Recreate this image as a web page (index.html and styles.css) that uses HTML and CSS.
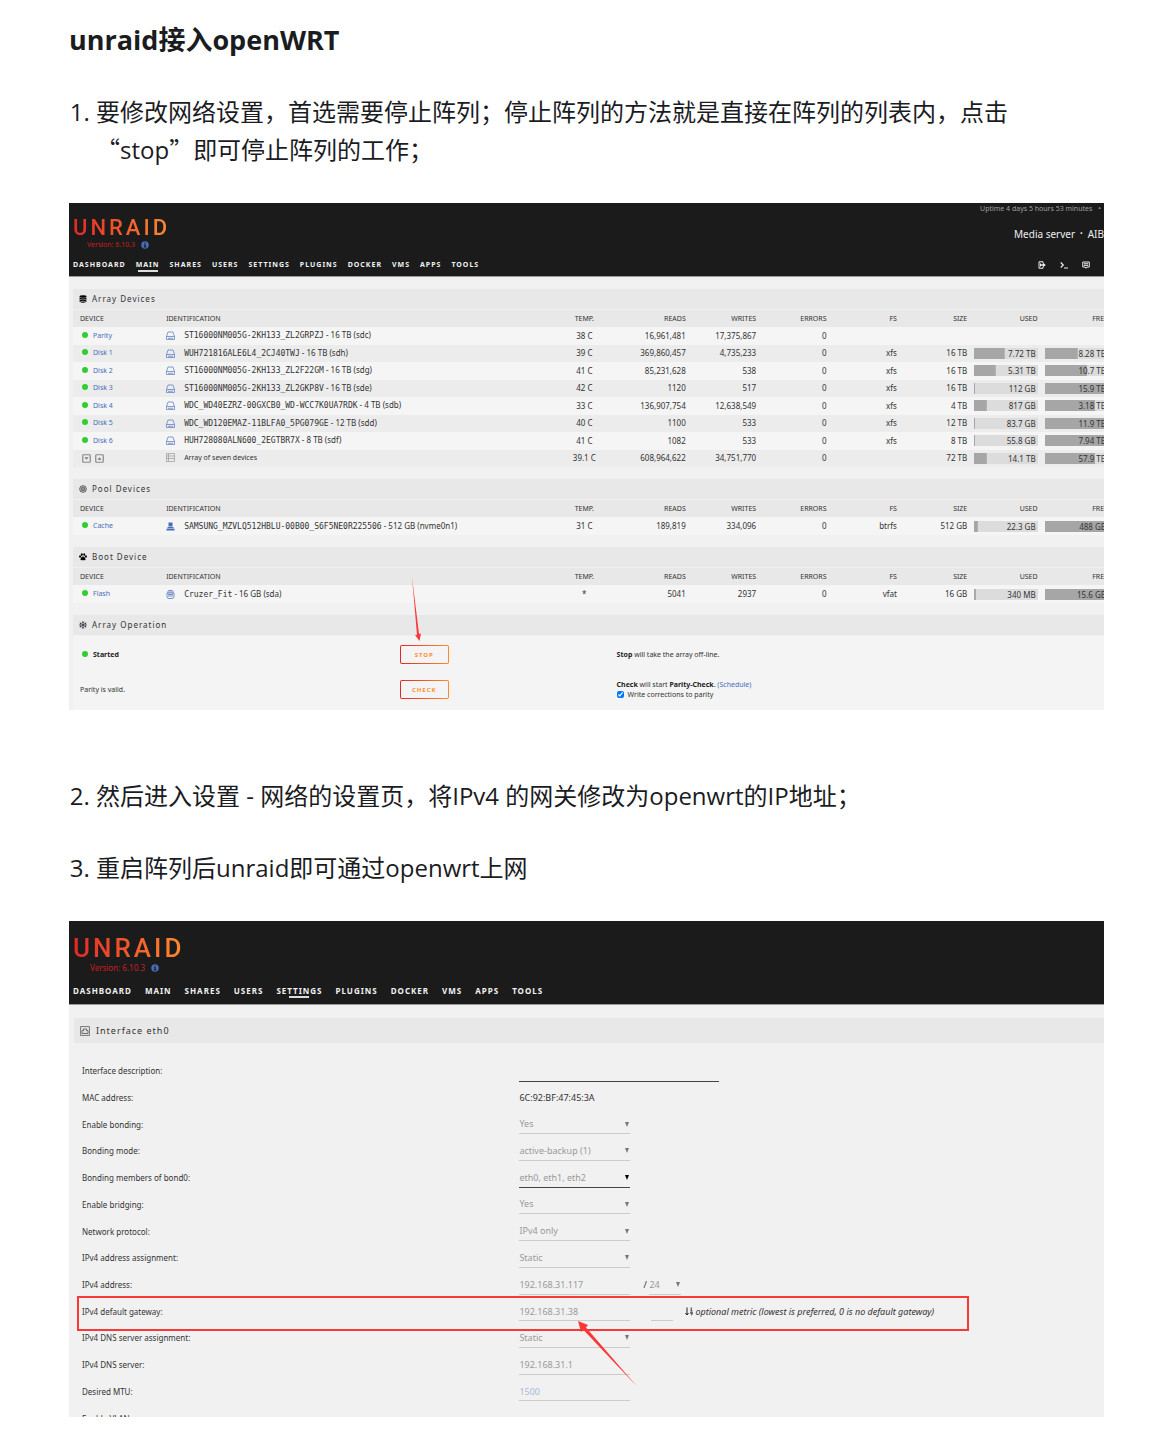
FILE: index.html
```html
<!DOCTYPE html>
<html lang="zh-CN">
<head>
<meta charset="utf-8">
<meta name="viewport" content="width=device-width, initial-scale=1">
<title>unraid接入openWRT</title>
<link rel="stylesheet" href="styles.css">
</head>
<body>
<svg class="sprite" aria-hidden="true">
  <symbol id="info" viewBox="0 0 16 16"><circle cx="8" cy="8" r="7.5" fill="#486dba"/><path d="M6.8 3h2.6v2.2H6.8zM5.8 6.6h3.6v4.6h1.2v1.6H5.6v-1.6h1.2V8.2h-1z" fill="#1b1b1b"/></symbol>
  <symbol id="disk" viewBox="0 0 18 18"><path d="M4 2h10l3 9v6H1v-6zM1 11h16M4 14.5h10" fill="none" stroke="#486dba" stroke-width="1.3"/></symbol>
  <symbol id="nvme" viewBox="0 0 18 18"><path d="M5 1h8v8H5zM4 10h10l3 3H1zM1 14h16v3H1z" fill="#486dba"/></symbol>
  <symbol id="usb" viewBox="0 0 18 18"><path d="M4 6V3q0-2 2-2h6q2 0 2 2v3M2 6h14v7q0 4-4 4H6q-4 0-4-4zM4 9h10M4 12h10M6 4h6" fill="none" stroke="#486dba" stroke-width="1.5"/></symbol>
  <symbol id="array" viewBox="0 0 18 18"><path d="M1 1h16v16H1zM1 6h16M1 11h16M5 1v16" fill="none" stroke="#999" stroke-width="1.4"/></symbol>
  <symbol id="database" viewBox="0 0 16 16"><ellipse cx="8" cy="3" rx="7" ry="2.6"/><path d="M1 4.8q7 3.6 14 0v2.6q-7 3.8-14 0zM1 8.5q7 3.6 14 0v2.4q-7 3.8-14 0zM1 12q7 3.6 14 0v1.6q-7 4-14 0z"/></symbol>
  <symbol id="pool" viewBox="0 0 16 16"><circle cx="8" cy="8" r="6.6" fill="none" stroke="#333" stroke-width="1.6"/><circle cx="8" cy="8" r="3.6" fill="none" stroke="#333" stroke-width="1.6"/><circle cx="8" cy="8" r="1.3"/></symbol>
  <symbol id="paw" viewBox="0 0 16 16"><ellipse cx="2.2" cy="7" rx="1.9" ry="2.4"/><ellipse cx="5.6" cy="3.2" rx="1.9" ry="2.6"/><ellipse cx="10.4" cy="3.2" rx="1.9" ry="2.6"/><ellipse cx="13.8" cy="7" rx="1.9" ry="2.4"/><path d="M8 7c2.5 0 5 3.500 5 5.600 0 2.400-2.800 2-5 1.400-2.200.6-5 1-5-1.400C3 10.500 5.500 7 8 7z"/></symbol>
  <symbol id="flake" viewBox="0 0 16 16"><path d="M8 .5v15M1.500 4.200l13 7.600M14.500 4.200l-13 7.600M5.800 1.500L8 3.700l2.200-2.200M5.800 14.500L8 12.300l2.200 2.200M1 7l3-.8L3.200 3M15 9l-3 .8.800 3.200M15 7l-3-.8.800-3.200M1 9l3 .8L3.200 13" fill="none" stroke="#222" stroke-width="1.4"/></symbol>
  <symbol id="down" viewBox="0 0 18 18"><rect x="1.500" y="1.500" width="15" height="15" rx="1.500" fill="none" stroke="#888" stroke-width="2.400"/><path d="M5 6.500h8l-4 5z" fill="#777"/></symbol>
  <symbol id="up" viewBox="0 0 18 18"><rect x="1.500" y="1.500" width="15" height="15" rx="1.500" fill="none" stroke="#888" stroke-width="2.400"/><path d="M5 11.500h8l-4-5z" fill="#777"/></symbol>
  <symbol id="logout" viewBox="0 0 16 16"><path d="M10 4.500V1.500H2v13h8v-3M5 5v6" fill="none" stroke="#eee" stroke-width="2"/><path d="M5.500 6.700H10V3.500L15.500 8 10 12.500V9.300H5.500z" fill="#eee"/></symbol>
  <symbol id="terminal" viewBox="0 0 16 16"><path d="M1.500 3l5 5-5 5M8 14h8" fill="none" stroke="#eee" stroke-width="2.400"/></symbol>
  <symbol id="chat" viewBox="0 0 16 16"><path d="M1.500 2h13v10H10l-2 2.500L6 12H1.500zM4 5.500h8M4 8.700h8" fill="none" stroke="#eee" stroke-width="2"/></symbol>
  <symbol id="port" viewBox="0 0 20 20"><path d="M1 1h18v18H1z" fill="#ddd" stroke="#666" stroke-width="1.600"/><path d="M4 15V9h3V6h6v3h3v6z" fill="none" stroke="#555" stroke-width="1.600"/></symbol>
  <symbol id="sort" viewBox="0 0 16 18"><path d="M4 1v14M.8 12L4 16l3.200-4" fill="none" stroke="#222" stroke-width="2"/><path d="M11 2.500l1.700-1V7M10.500 7.500h4.500M14.500 13.500h-3V10h3v4.500l-2.500 2" fill="none" stroke="#222" stroke-width="1.500"/></symbol>
</svg>

<main class="article">
  <h1>unraid接入openWRT</h1>

  <ol class="steps">
    <li>要修改网络设置，首选需要停止阵列；停止阵列的方法就是直接在阵列的列表内，点击<span class="cjk">“</span>stop<span class="cjk">”</span>即可停止阵列的工作；</li>
  </ol>

  <section class="shot shot-main">
    <header class="bar">
      <div class="brand">
        <div class="logo">UNRAID</div>
        <div class="version">Version: 6.10.3 <svg class="info"><use href="#info"/></svg></div>
      </div>
      <div class="server">
        <div class="uptime"><span>Uptime 4 days 5 hours 53 minutes</span><span>•</span></div>
        <div class="name"><span>Media server</span><small>•</small><span>AIB</span></div>
      </div>
      <nav class="menu">
        <a href="#dashboard">DASHBOARD</a><a class="on" href="#main">MAIN</a><a href="#shares">SHARES</a><a href="#users">USERS</a><a href="#settings">SETTINGS</a><a href="#plugins">PLUGINS</a><a href="#docker">DOCKER</a><a href="#vms">VMS</a><a href="#apps">APPS</a><a href="#tools">TOOLS</a>
      </nav>
      <div class="tools">
        <button type="button" aria-label="Logout"><svg><use href="#logout"/></svg></button>
        <button type="button" aria-label="Terminal"><svg><use href="#terminal"/></svg></button>
        <button type="button" aria-label="Feedback"><svg><use href="#chat"/></svg></button>
      </div>
    </header>

    <div class="panels">
      <section class="panel">
        <h2><svg><use href="#database"/></svg>Array Devices</h2>
        <table class="devices array">
          <colgroup><col class="c-dev"><col><col class="c-temp"><col class="c-num" span="7"></colgroup>
          <thead><tr><th>DEVICE</th><th>IDENTIFICATION</th><th>TEMP.</th><th>READS</th><th>WRITES</th><th>ERRORS</th><th>FS</th><th>SIZE</th><th>USED</th><th>FREE</th></tr></thead>
          <tbody>
            <tr><td><i class="dot"></i><a href="#parity">Parity</a></td><td><svg><use href="#disk"/></svg><code>ST16000NM005G-2KH133_ZL2GRPZJ</code> - 16 TB (sdc)</td><td>38 C</td><td>16,961,481</td><td>17,375,867</td><td>0</td><td></td><td></td><td></td><td></td></tr>
            <tr><td><i class="dot"></i><a href="#disk1">Disk 1</a></td><td><svg><use href="#disk"/></svg><code>WUH721816ALE6L4_2CJ40TWJ</code> - 16 TB (sdh)</td><td>39 C</td><td>369,860,457</td><td>4,735,233</td><td>0</td><td>xfs</td><td>16 TB</td><td><div class="meter" style="--fill:48%">7.72 TB</div></td><td><div class="meter" style="--fill:52%">8.28 TB</div></td></tr>
            <tr><td><i class="dot"></i><a href="#disk2">Disk 2</a></td><td><svg><use href="#disk"/></svg><code>ST16000NM005G-2KH133_ZL2F22GM</code> - 16 TB (sdg)</td><td>41 C</td><td>85,231,628</td><td>538</td><td>0</td><td>xfs</td><td>16 TB</td><td><div class="meter" style="--fill:34%">5.31 TB</div></td><td><div class="meter" style="--fill:67%">10.7 TB</div></td></tr>
            <tr><td><i class="dot"></i><a href="#disk3">Disk 3</a></td><td><svg><use href="#disk"/></svg><code>ST16000NM005G-2KH133_ZL2GKP8V</code> - 16 TB (sde)</td><td>42 C</td><td>1120</td><td>517</td><td>0</td><td>xfs</td><td>16 TB</td><td><div class="meter" style="--fill:2%">112 GB</div></td><td><div class="meter" style="--fill:99%">15.9 TB</div></td></tr>
            <tr><td><i class="dot"></i><a href="#disk4">Disk 4</a></td><td><svg><use href="#disk"/></svg><code>WDC_WD40EZRZ-00GXCB0_WD-WCC7K0UA7RDK</code> - 4 TB (sdb)</td><td>33 C</td><td>136,907,754</td><td>12,638,549</td><td>0</td><td>xfs</td><td>4 TB</td><td><div class="meter" style="--fill:20%">817 GB</div></td><td><div class="meter" style="--fill:80%">3.18 TB</div></td></tr>
            <tr><td><i class="dot"></i><a href="#disk5">Disk 5</a></td><td><svg><use href="#disk"/></svg><code>WDC_WD120EMAZ-11BLFA0_5PG079GE</code> - 12 TB (sdd)</td><td>40 C</td><td>1100</td><td>533</td><td>0</td><td>xfs</td><td>12 TB</td><td><div class="meter" style="--fill:2%">83.7 GB</div></td><td><div class="meter" style="--fill:99%">11.9 TB</div></td></tr>
            <tr><td><i class="dot"></i><a href="#disk6">Disk 6</a></td><td><svg><use href="#disk"/></svg><code>HUH728080ALN600_2EGTBR7X</code> - 8 TB (sdf)</td><td>41 C</td><td>1082</td><td>533</td><td>0</td><td>xfs</td><td>8 TB</td><td><div class="meter" style="--fill:2%">55.8 GB</div></td><td><div class="meter" style="--fill:99%">7.94 TB</div></td></tr>
            <tr><td><button class="spin" type="button" aria-label="Spin down"><svg><use href="#down"/></svg></button><button class="spin" type="button" aria-label="Spin up"><svg><use href="#up"/></svg></button></td><td class="words"><svg><use href="#array"/></svg>Array of seven devices</td><td>39.1 C</td><td>608,964,622</td><td>34,751,770</td><td>0</td><td></td><td>72 TB</td><td><div class="meter" style="--fill:20%">14.1 TB</div></td><td><div class="meter" style="--fill:80%">57.9 TB</div></td></tr>
          </tbody>
        </table>
      </section>

      <section class="panel">
        <h2><svg><use href="#pool"/></svg>Pool Devices</h2>
        <table class="devices">
          <colgroup><col class="c-dev"><col><col class="c-temp"><col class="c-num" span="7"></colgroup>
          <thead><tr><th>DEVICE</th><th>IDENTIFICATION</th><th>TEMP.</th><th>READS</th><th>WRITES</th><th>ERRORS</th><th>FS</th><th>SIZE</th><th>USED</th><th>FREE</th></tr></thead>
          <tbody><tr><td><i class="dot"></i><a href="#cache">Cache</a></td><td><svg><use href="#nvme"/></svg><code>SAMSUNG_MZVLQ512HBLU-00B00_S6F5NE0R225506</code> - 512 GB (nvme0n1)</td><td>31 C</td><td>189,819</td><td>334,096</td><td>0</td><td>btrfs</td><td>512 GB</td><td><div class="meter" style="--fill:6%">22.3 GB</div></td><td><div class="meter" style="--fill:96%">488 GB</div></td></tr></tbody>
        </table>
      </section>

      <section class="panel">
        <h2><svg><use href="#paw"/></svg>Boot Device</h2>
        <table class="devices">
          <colgroup><col class="c-dev"><col><col class="c-temp"><col class="c-num" span="7"></colgroup>
          <thead><tr><th>DEVICE</th><th>IDENTIFICATION</th><th>TEMP.</th><th>READS</th><th>WRITES</th><th>ERRORS</th><th>FS</th><th>SIZE</th><th>USED</th><th>FREE</th></tr></thead>
          <tbody><tr><td><i class="dot"></i><a href="#flash">Flash</a></td><td><svg><use href="#usb"/></svg><code>Cruzer_Fit</code> - 16 GB (sda)</td><td>*</td><td>5041</td><td>2937</td><td>0</td><td>vfat</td><td>16 GB</td><td><div class="meter" style="--fill:3%">340 MB</div></td><td><div class="meter" style="--fill:98%">15.6 GB</div></td></tr></tbody>
        </table>
      </section>

      <section class="panel">
        <h2><svg><use href="#flake"/></svg>Array Operation</h2>
        <div class="operation">
          <div><i class="dot"></i><b>Started</b></div>
          <div><button class="action" type="button">STOP</button></div>
          <div><b>Stop</b> will take the array off-line.</div>
          <div>Parity is valid.</div>
          <div><button class="action" type="button">CHECK</button></div>
          <div><b>Check</b> will start <b>Parity-Check</b>. <a href="#schedule">(Schedule)</a><label class="check"><input type="checkbox" checked>Write corrections to parity</label></div>
        </div>
      </section>
    </div>
    <svg class="arrow-stop" viewBox="0 0 10 64" aria-hidden="true"><path d="M1 0L8 57l2-.5L8.500 64 4 58l2-.2z" fill="#f93838"/></svg>
  </section>

  <ol class="steps later" start="2">
    <li>然后进入设置 - 网络的设置页，将IPv4 的网关修改为openwrt的IP地址；</li>
    <li>重启阵列后unraid即可通过openwrt上网</li>
  </ol>

  <section class="shot shot-net">
    <header class="bar">
      <div class="brand">
        <div class="logo">UNRAID</div>
        <div class="version">Version: 6.10.3 <svg class="info"><use href="#info"/></svg></div>
      </div>
      <nav class="menu">
        <a href="#dashboard">DASHBOARD</a><a href="#main">MAIN</a><a href="#shares">SHARES</a><a href="#users">USERS</a><a class="on" href="#settings">SETTINGS</a><a href="#plugins">PLUGINS</a><a href="#docker">DOCKER</a><a href="#vms">VMS</a><a href="#apps">APPS</a><a href="#tools">TOOLS</a>
      </nav>
    </header>
    <div class="panels">
      <h2><svg><use href="#port"/></svg>Interface eth0</h2>
      <form class="settings">
        <div class="row"><label for="desc">Interface description:</label><div><input id="desc" class="wide" type="text"></div></div>
        <div class="row"><span>MAC address:</span><div>6C:92:BF:47:45:3A</div></div>
        <div class="row"><label for="bonding">Enable bonding:</label><div><select id="bonding" disabled><option>Yes</option></select></div></div>
        <div class="row"><label for="mode">Bonding mode:</label><div><select id="mode" disabled><option>active-backup (1)</option></select></div></div>
        <div class="row"><label for="members">Bonding members of bond0:</label><div><select id="members" class="live"><option>eth0, eth1, eth2</option></select></div></div>
        <div class="row"><label for="bridging">Enable bridging:</label><div><select id="bridging" disabled><option>Yes</option></select></div></div>
        <div class="row"><label for="protocol">Network protocol:</label><div><select id="protocol" disabled><option>IPv4 only</option></select></div></div>
        <div class="row"><label for="assign">IPv4 address assignment:</label><div><select id="assign" disabled><option>Static</option></select></div></div>
        <div class="row"><label for="addr">IPv4 address:</label><div><input id="addr" type="text" value="192.168.31.117" disabled><span class="slash">/</span><select class="mask" aria-label="Network mask" disabled><option>24</option></select></div></div>
        <div class="row marked"><label for="gw">IPv4 default gateway:</label><div><input id="gw" type="text" value="192.168.31.38" disabled><input class="metric" type="text" aria-label="Metric" disabled><svg class="sort"><use href="#sort"/></svg><em>optional metric (lowest is preferred, 0 is no default gateway)</em></div>
          <svg class="arrow-gw" viewBox="0 0 60 66" aria-hidden="true"><path d="M0 0l10 4-2 2.500 51 59L5.500 9 3 11z" fill="#f93838"/></svg></div>
        <div class="row"><label for="dnsassign">IPv4 DNS server assignment:</label><div><select id="dnsassign" disabled><option>Static</option></select></div></div>
        <div class="row"><label for="dns">IPv4 DNS server:</label><div><input id="dns" type="text" value="192.168.31.1" disabled></div></div>
        <div class="row"><label for="mtu">Desired MTU:</label><div><input id="mtu" class="hint" type="text" placeholder="1500" disabled></div></div>
        <div class="row"><span>Enable VLANs:</span></div>
      </form>
    </div>
  </section>
</main>
</body>
</html>
```
FILE: styles.css
```css
*, *::before, *::after { box-sizing: border-box; }

body {
  margin: 0;
  background: #fff;
  color: #1b1c1f;
  font: 24px/38px "Open Sans", "Noto Sans CJK SC", sans-serif;
}

.sprite { display: none; }
.article { padding: 21px 45px 21px 69px; }

h1 { margin: 0 0 34px; font-size: 27px; line-height: 38px; font-weight: 700; }

.steps { margin: 0; padding-left: 27px; }
.steps li { margin-bottom: 34px; }
.later { margin-top: 67px; }
.cjk { font-family: "Noto Sans CJK SC", sans-serif; line-height: 0; }

/* Embedded admin screens */
.shot {
  position: relative;
  overflow: hidden;
  background: #f1f1f1;
  color: #333;
  font: 8px/10px "Noto Sans", sans-serif;
}
.shot a { color: #486dba; text-decoration: none; }
.shot button, .shot input, .shot select { font: inherit; }

.bar {
  display: grid;
  grid-template-columns: 1fr auto;
  grid-template-rows: 1fr auto;
  background: #1b1b1b;
  border-bottom: 1px solid #999;
  padding-left: 4px;
}
.brand { grid-column: 1; }
.logo {
  width: max-content;
  font-family: Roboto, sans-serif;
  font-weight: 500;
  letter-spacing: 3px;
  background: linear-gradient(90deg, #e22828, #ff8c2f);
  -webkit-background-clip: text;
  background-clip: text;
  color: transparent;
}
.version { display: flex; align-items: center; gap: 6px; color: #c81f1f; }
.menu { grid-column: 1; display: flex; }
.shot .menu a {
  position: relative;
  color: #f2f2f2;
  font-weight: 700;
  letter-spacing: 1px;
}
.menu .on::after {
  content: "";
  position: absolute;
  left: 50%;
  bottom: -2px;
  width: 20px;
  height: 2px;
  margin-left: -10px;
  background: #ddd;
}

.shot h2 {
  display: flex;
  align-items: center;
  margin: 0;
  background: #e8e8e8;
  color: #333;
  font-weight: 400;
  letter-spacing: 1px;
}

/* Main page */
.shot-main .bar { height: 74px; }
.shot-main .logo { font-size: 22px; line-height: 22px; margin-top: 14px; }
.shot-main .version { font-size: 7px; line-height: 10px; padding-left: 14px; margin-top: 1px; }
.info { width: 8px; height: 8px; }
.shot-main .menu { gap: 10px; font-size: 7px; padding-bottom: 6px; }
.server { grid-column: 2; grid-row: 1; color: #eee; text-align: right; }
.uptime { display: flex; justify-content: flex-end; gap: 6px; padding-right: 3px; margin-top: 1px; font-size: 7px; color: #a0a0a0; }
.name { display: flex; justify-content: flex-end; align-items: center; gap: 5px; margin-top: 13px; font-size: 10px; line-height: 14px; }
.name small { font-size: 7px; }
.tools { grid-column: 2; grid-row: 2; display: flex; justify-content: flex-end; gap: 14px; padding: 0 14px 6px 0; }
.tools button { border: 0; padding: 0; background: none; width: 8px; height: 10px; }
.tools svg { display: block; width: 8px; height: 8px; }

.shot-main .panels { margin: 12px -4px 0 4px; }
.panel + .panel { margin-top: 12px; }
.panel h2 { height: 21px; padding-left: 6px; gap: 5px; border-bottom: 1px solid #f1f1f1; font-size: 8px; }
.panel h2 svg { width: 8px; height: 8px; }

.devices { width: 100%; height: 35px; table-layout: fixed; border-collapse: collapse; white-space: nowrap; }
.array { height: 157px; }
.devices thead tr { height: 17px; }
.devices tbody tr { height: 17px; }
.c-dev { width: 9%; }
.c-temp { width: 6%; }
.c-num { width: 6.8%; }
.devices th, .devices td { padding: 0; text-align: right; vertical-align: middle; }
.devices th { background: #e8e8e8; font-size: 7px; font-weight: 400; }
.devices td:nth-child(1), .devices th:nth-child(1) { text-align: left; padding-left: 7px; }
.devices td:nth-child(2), .devices th:nth-child(2) { text-align: left; }
.devices td:nth-child(3), .devices th:nth-child(3) { text-align: center; }
.devices td:nth-child(1), .words { font-size: 7px; }
.devices tbody tr { background: #f5f5f5; }
.devices tbody tr:nth-child(even) { background: #ececec; }
.devices code { font: 8px/10px "DejaVu Sans Mono", monospace; }
.devices td:nth-child(2) svg { width: 9px; height: 9px; margin-right: 9px; vertical-align: -2px; }
.dot { display: inline-block; width: 6px; height: 6px; margin: 0 5px 0 2px; border-radius: 50%; background: #32cd32; }
.spin { border: 0; padding: 0; background: none; width: 9px; height: 9px; margin: 0 2px; vertical-align: middle; }
.spin svg { display: block; width: 9px; height: 9px; }
.meter {
  height: 11px;
  line-height: 11px;
  margin-left: 7px;
  padding-right: 2px;
  background: linear-gradient(#a6a6a6, #a6a6a6) 0 0 / var(--fill) 100% no-repeat #dcdcdc;
}

.operation {
  display: grid;
  grid-template-columns: 31.1% 21.1% 1fr;
  grid-auto-rows: 35px;
  align-items: center;
  height: 74px;
  padding: 1px 0 0 7px;
  background: #f4f4f4;
  font-size: 7px;
}
.operation b { color: #222; }
.shot .action {
  display: block;
  width: 49px;
  height: 19px;
  padding: 0;
  border: 1px solid transparent;
  border-radius: 2px;
  background: linear-gradient(#f4f4f4, #f4f4f4) padding-box, linear-gradient(90deg, #e22828, #ff8c2f) border-box;
  color: #ff8c2f;
  font-size: 6px;
  font-weight: 700;
  letter-spacing: 1px;
}
.check { display: flex; align-items: center; gap: 4px; }
.check input { width: 7px; height: 7px; margin: 0; }

.arrow-stop { position: absolute; left: 342px; top: 374px; width: 10px; height: 64px; }

/* Network settings */
.shot-net { max-height: 496px; }
.shot-net .bar { height: 84px; }
.shot-net .logo { font-size: 26px; line-height: 26px; margin-top: 14px; }
.shot-net .version { padding-left: 17px; margin-top: 2px; }
.shot-net .menu { gap: 13px; padding-bottom: 8px; }
.shot-net .panels { margin: 13px 0 0 5px; }
.shot-net h2 { height: 25px; padding-left: 6px; gap: 6px; font-size: 9px; }
.shot-net h2 svg { width: 10px; height: 10px; }

.settings {
  display: grid;
  grid-template-rows: repeat(14, 1fr);
  height: 374px;
  margin-top: 15px;
  padding-left: 8px;
}
.row { position: relative; display: grid; grid-template-columns: 42.8% 1fr; align-items: center; }
.row > div { display: flex; align-items: center; font-size: 9px; white-space: nowrap; }
.settings input, .settings select {
  width: 111px;
  height: 19px;
  margin: 0;
  padding: 0;
  border: 0;
  border-bottom: 1px solid #ccc;
  border-radius: 0;
  background: none;
  color: #999;
  opacity: 1;
}
.settings select {
  appearance: none;
  background: url("data:image/svg+xml,%3Csvg xmlns='http://www.w3.org/2000/svg' viewBox='0 0 4 5'%3E%3Cpath d='M0 0h4L2 5z' fill='%23777'/%3E%3C/svg%3E") right 1px center / 4px 5px no-repeat;
}
.settings .live {
  border-color: #444;
  background-image: url("data:image/svg+xml,%3Csvg xmlns='http://www.w3.org/2000/svg' viewBox='0 0 4 5'%3E%3Cpath d='M0 0h4L2 5z' fill='%23000'/%3E%3C/svg%3E");
}
.settings .wide { width: 200px; height: 21px; border-color: #444; }
.settings .mask { width: 32px; }
.settings .metric { width: 22px; margin-left: 21px; }
.hint::placeholder { color: #a9b9dc; opacity: 1; }
.slash { width: 6px; margin-left: 13px; }
.sort { width: 8px; height: 9px; margin: 0 2px 0 12px; }

.marked::before {
  content: "";
  position: absolute;
  left: -5px;
  top: -2px;
  width: 892px;
  height: 35px;
  border: 2px solid #f93838;
}
.arrow-gw { position: absolute; left: 496px; top: 23px; width: 60px; height: 66px; z-index: 1; }
```
